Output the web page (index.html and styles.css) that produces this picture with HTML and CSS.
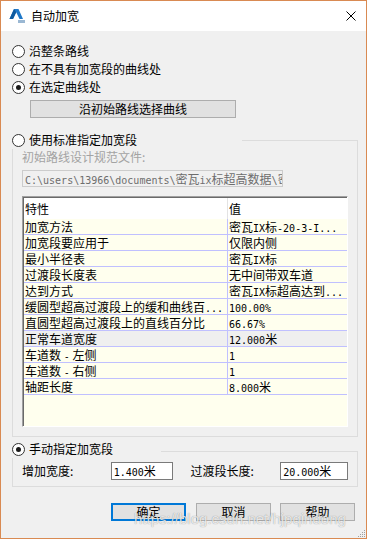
FILE: index.html
```html
<!DOCTYPE html>
<html>
<head>
	<title>自动加宽</title>
	<meta charset="utf-8">
	<link rel="stylesheet" href="styles.css">
</head>
<body>
<div class="win">
	<div class="title">
		<svg class="icon" width="16" height="14" viewBox="0 0 16 14">
			<path d="M5 0 L9.5 0 L14 10 L10.5 10 L7.2 3.2 L4 10 L0.5 10 Z" fill="#1f78c8"/>
			<path d="M5 0 L7.2 3.2 L4 10 L0.5 10 Z" fill="#0f5a9e"/>
			<rect x="9" y="11" width="7" height="3" fill="#9bb8d3"/>
		</svg>
		<span>自动加宽</span>
		<svg class="close" width="10" height="10" viewBox="0 0 10 10">
			<path d="M0.5 0.5 L9.5 9.5 M9.5 0.5 L0.5 9.5" stroke="#000" stroke-width="1"/>
		</svg>
	</div>

	<div class="main">
		<div class="opt"><span class="radio"></span>沿整条路线</div>
		<div class="opt"><span class="radio"></span>在不具有加宽段的曲线处</div>
		<div class="opt"><span class="radio on"></span>在选定曲线处</div>
		<div class="btn pick">沿初始路线选择曲线</div>

		<div class="legend first">
			<div class="opt"><span class="radio"></span>使用标准指定加宽段</div>
			<div class="rule"></div>
		</div>
		<div class="group one">
			<div class="dim">初始路线设计规范文件:</div>
			<div class="path"><span class="a">C:\users\13966\documents\</span>密瓦<span class="a">ix</span>标超高数据<span class="a">\</span>密瓦<span class="a">ix</span></div>
			<div class="grid">
				<div class="head"><div class="k">特性</div><div class="v">值</div></div>
				<div class="row"><div class="k">加宽方法</div><div class="v">密瓦<span class="a">IX</span>标<span class="a">-20-3-I...</span></div></div>
				<div class="row"><div class="k">加宽段要应用于</div><div class="v">仅限内侧</div></div>
				<div class="row"><div class="k">最小半径表</div><div class="v">密瓦<span class="a">IX</span>标</div></div>
				<div class="row"><div class="k">过渡段长度表</div><div class="v">无中间带双车道</div></div>
				<div class="row"><div class="k">达到方式</div><div class="v">密瓦<span class="a">IX</span>标超高达到<span class="a">...</span></div></div>
				<div class="row"><div class="k">缓圆型超高过渡段上的缓和曲线百<span class="a">...</span></div><div class="v"><span class="a">100.00%</span></div></div>
				<div class="row"><div class="k">直圆型超高过渡段上的直线百分比</div><div class="v"><span class="a">66.67%</span></div></div>
				<div class="row sel"><div class="k">正常车道宽度</div><div class="v"><span class="a">12.000</span>米</div></div>
				<div class="row"><div class="k">车道数 <span class="a">-</span> 左侧</div><div class="v"><span class="a">1</span></div></div>
				<div class="row"><div class="k">车道数 <span class="a">-</span> 右侧</div><div class="v"><span class="a">1</span></div></div>
				<div class="row"><div class="k">轴距长度</div><div class="v"><span class="a">8.000</span>米</div></div>
			</div>
		</div>

		<div class="legend second">
			<div class="opt"><span class="radio on"></span>手动指定加宽段</div>
			<div class="rule"></div>
		</div>
		<div class="group two">
			<div class="fields">
				<div class="lab">增加宽度:</div>
				<div class="inp w1"><span class="a">1.400</span>米</div>
				<div class="lab lab2">过渡段长度:</div>
				<div class="inp w2"><span class="a">20.000</span>米</div>
			</div>
		</div>

		<div class="actions">
			<div class="btn def">确定</div>
			<div class="btn">取消</div>
			<div class="btn">帮助</div>
		</div>
	</div>

	<div class="mark">https://blog.csdn.net/hjpqindong</div>
	<svg class="grip" width="10" height="10" viewBox="0 0 10 10">
		<rect x="8" y="2" width="1" height="1" fill="#a0a0a0"/>
		<rect x="6" y="4" width="1" height="1" fill="#a0a0a0"/>
		<rect x="8" y="4" width="1" height="1" fill="#a0a0a0"/>
		<rect x="4" y="6" width="1" height="1" fill="#a0a0a0"/>
		<rect x="6" y="6" width="1" height="1" fill="#a0a0a0"/>
		<rect x="8" y="6" width="1" height="1" fill="#a0a0a0"/>
		<rect x="2" y="8" width="1" height="1" fill="#a0a0a0"/>
		<rect x="4" y="8" width="1" height="1" fill="#a0a0a0"/>
		<rect x="6" y="8" width="1" height="1" fill="#a0a0a0"/>
		<rect x="8" y="8" width="1" height="1" fill="#a0a0a0"/>
	</svg>
</div>
</body>
</html>
```

FILE: styles.css
```css
*{
	padding: 0;
	margin: 0;
	box-sizing: border-box;
}
body{
	font: 12px/16px "Noto Sans CJK SC", sans-serif;
	color: #000;
	background: #fff;
}
.a{
	font-family: "DejaVu Sans Mono", monospace;
	font-size: 10px;
}
.win{
	width: 367px;
	height: 539px;
	border: 1px solid #d98a52;
	background: #f0f0f0;
	position: relative;
	overflow: hidden;
}
.title{
	height: 30px;
	background: #fff;
	display: flex;
	align-items: center;
	padding-left: 8px;
}
.title .icon{
	margin-right: 6px;
}
.title .close{
	margin-left: auto;
	margin-right: 10px;
}

.main{
	padding: 11px 8px 0 11px;
}
.opt{
	display: flex;
	align-items: center;
	height: 18px;
	white-space: nowrap;
}
.radio{
	width: 13px;
	height: 13px;
	border: 1px solid #333;
	border-radius: 50%;
	background: #fff;
	margin-right: 4px;
	flex: none;
	display: flex;
	align-items: center;
	justify-content: center;
}
.radio.on::after{
	content: '';
	width: 5px;
	height: 5px;
	border-radius: 50%;
	background: #1a1a1a;
}

.btn{
	height: 18px;
	width: 75px;
	background: #e1e1e1;
	border: 1px solid #adadad;
	text-align: center;
	line-height: 16px;
}
.pick{
	width: 206px;
	margin: 4px 0 0 18px;
}

.legend{
	display: flex;
	height: 18px;
}
.legend.first{
	margin-top: 13px;
}
.legend.first .opt{
	width: 230px;
}
.legend.second{
	margin-top: 3px;
}
.legend.second .opt{
	width: 149px;
}
.rule{
	flex: 1;
	margin-top: 9px;
	border-top: 1px solid #dcdcdc;
	border-right: 1px solid #dcdcdc;
}
.legend.second .rule{
	margin-top: 11px;
}
.group{
	border: 1px solid #dcdcdc;
	border-top: none;
	padding: 0 9px 9px 9px;
}
.dim{
	color: #a3a3a3;
}
.path{
	margin-top: 5px;
	height: 17px;
	width: 261px;
	border: 1px solid #cccccc;
	color: #6d6d6d;
	padding-left: 2px;
	line-height: 15px;
	white-space: nowrap;
	overflow: hidden;
}

.grid{
	margin-top: 9px;
	height: 231px;
	width: 326px;
	background: #ffffee;
	border: 1px solid;
	border-color: #a0a0a0 #fff #fff #a0a0a0;
	box-shadow: inset 1px 1px #696969;
	padding: 1px 0 0 1px;
}
.head, .row{
	display: flex;
	white-space: nowrap;
}
.head{
	height: 21px;
	background: #fff;
	align-items: center;
}
.head .k{
	border-right: 1px solid #e3e3e3;
	height: 21px;
	line-height: 21px;
}
.row{
	height: 16px;
	border-bottom: 1px solid #c0c0ff;
	line-height: 15px;
}
.k{
	width: 204px;
	padding-left: 1px;
	border-right: 1px solid #c0c0ff;
	overflow: hidden;
	flex: none;
}
.v{
	flex: 1;
	padding-left: 1px;
	overflow: hidden;
}
.row.sel{
	background: #efefef;
}

.group.two{
	padding-top: 4px;
	padding-bottom: 6px;
}
.fields{
	display: flex;
	align-items: center;
	height: 18px;
}
.lab{
	width: 89px;
	white-space: nowrap;
}
.lab2{
	margin-left: 18px;
	width: 90px;
}
.inp{
	height: 18px;
	background: #fff;
	border: 1px solid #7a7a7a;
	padding-left: 2px;
	line-height: 16px;
	white-space: nowrap;
}
.w1{
	width: 62px;
}
.w2{
	width: 68px;
}

.actions{
	display: flex;
	margin-top: 16px;
	padding-left: 99px;
}
.actions .btn + .btn{
	margin-left: 10px;
}
.actions .btn:last-child{
	margin-left: 9px;
}
.btn.def{
	border: 2px solid #0078d7;
	line-height: 14px;
}

.mark{
	position: absolute;
	left: 133px;
	top: 509px;
	font: 15px "Liberation Sans", sans-serif;
	color: rgba(255, 255, 255, 0.8);
	text-shadow: 0 0 1px rgba(0, 0, 0, 0.45);
	white-space: nowrap;
}
.grip{
	position: absolute;
	right: 0;
	bottom: 0;
}
```
